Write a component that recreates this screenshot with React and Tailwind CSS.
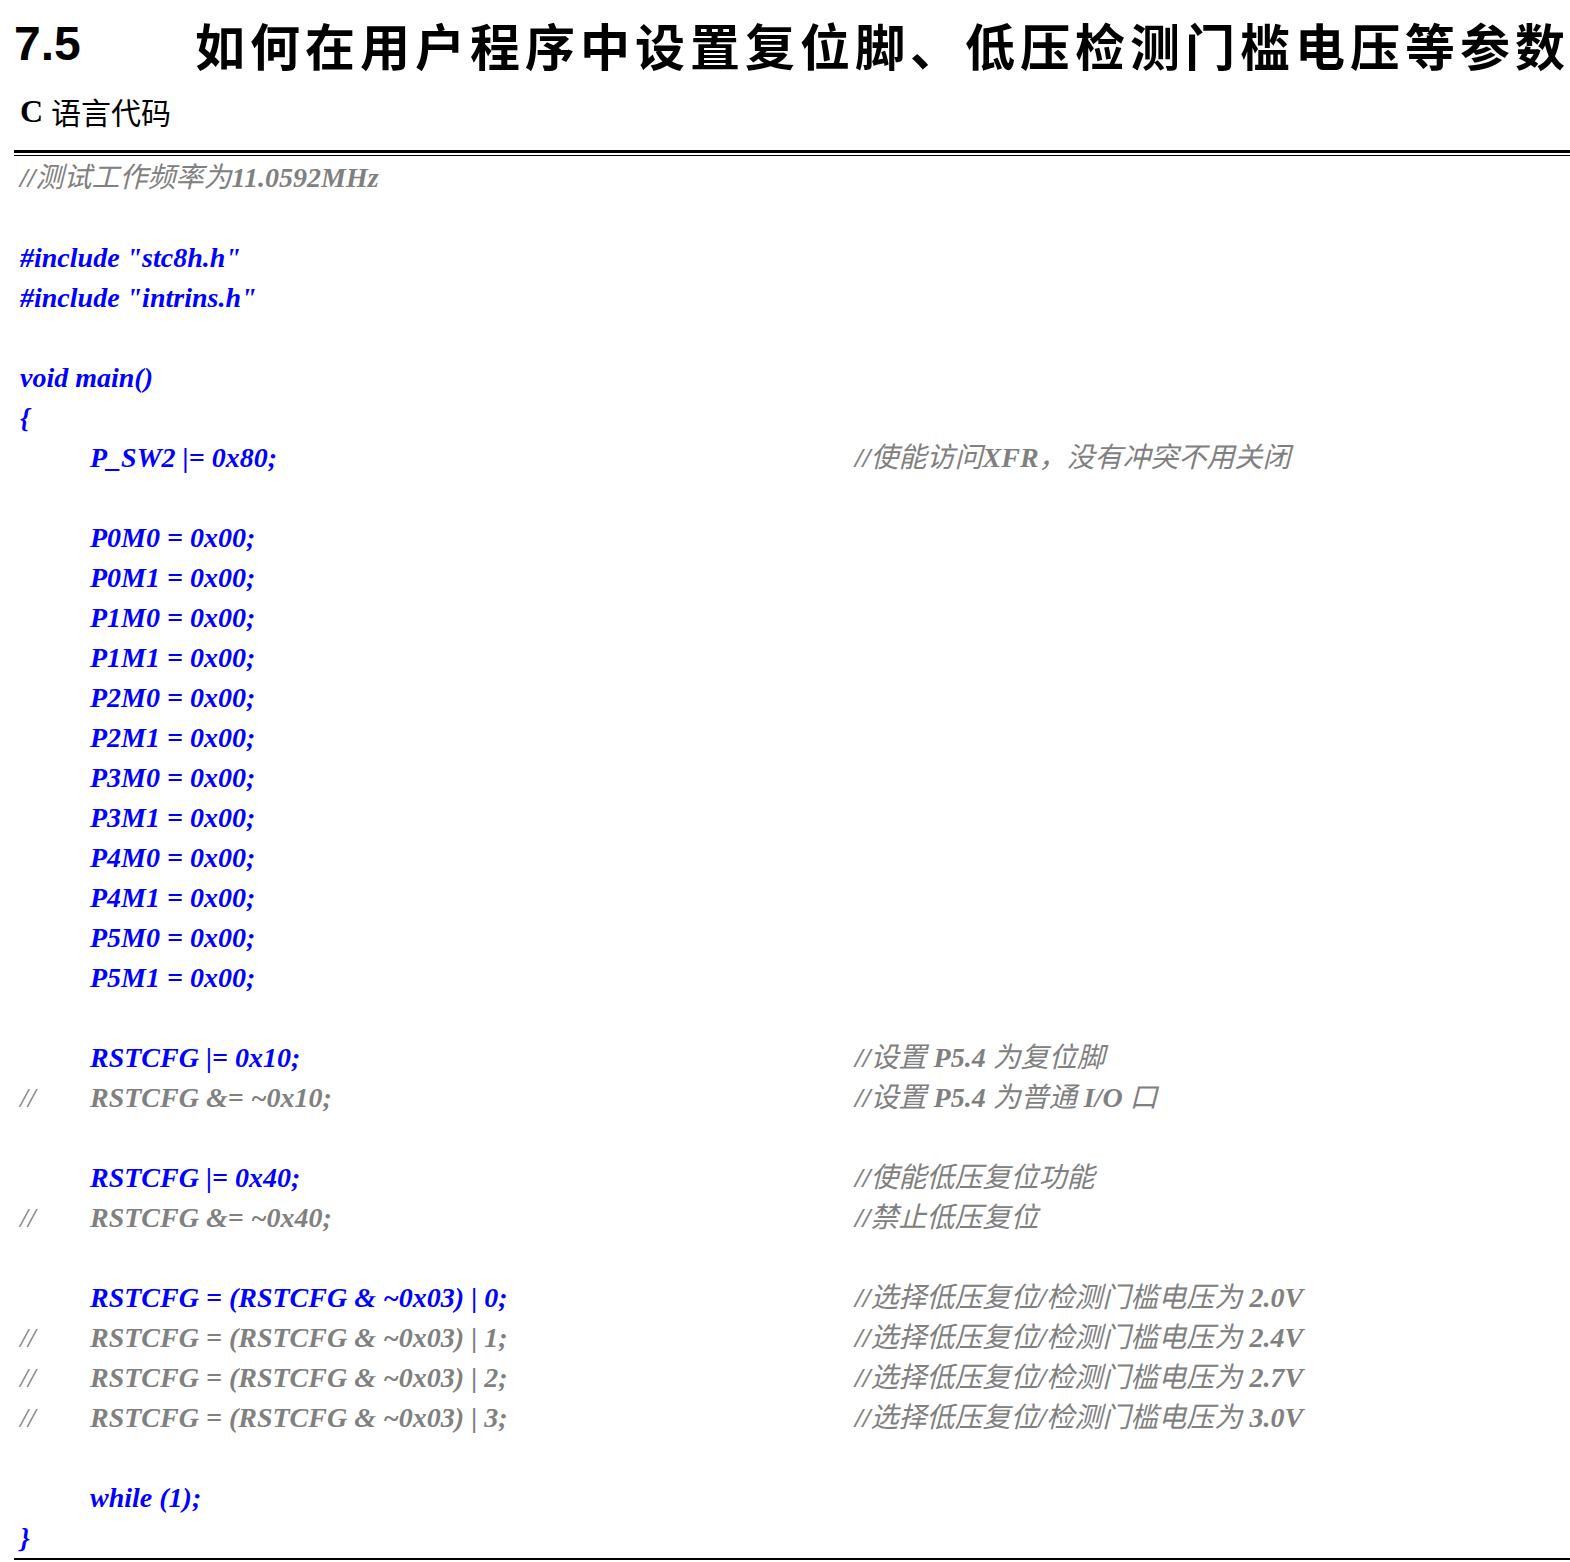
const BLUE = "text-[#0000ff]";
const GRAY = "text-[#808080]";

function Mixed({ text }) {
  const parts = text.split(/([\u3000-\u9fff\uff00-\uffef]+)/);
  return parts.map((p, i) =>
    /[\u3000-\u9fff\uff00-\uffef]/.test(p) ? (
      <span key={i} className="font-normal">{p}</span>
    ) : (
      <span key={i}>{p}</span>
    )
  );
}

const rows = [
  { full: "//测试工作频率为11.0592MHz", fc: GRAY },
  {},
  { full: '#include "stc8h.h"', fc: BLUE },
  { full: '#include "intrins.h"', fc: BLUE },
  {},
  { full: "void main()", fc: BLUE },
  { full: "{", fc: BLUE },
  { code: "P_SW2 |= 0x80;", c: BLUE, cm: "//使能访问XFR，没有冲突不用关闭" },
  {},
  ...["P0M0", "P0M1", "P1M0", "P1M1", "P2M0", "P2M1", "P3M0", "P3M1", "P4M0", "P4M1", "P5M0", "P5M1"].map((r) => ({ code: `${r} = 0x00;`, c: BLUE })),
  {},
  { code: "RSTCFG |= 0x10;", c: BLUE, cm: "//设置 P5.4 为复位脚" },
  { pre: "//", code: "RSTCFG &= ~0x10;", c: GRAY, cm: "//设置 P5.4 为普通 I/O 口" },
  {},
  { code: "RSTCFG |= 0x40;", c: BLUE, cm: "//使能低压复位功能" },
  { pre: "//", code: "RSTCFG &= ~0x40;", c: GRAY, cm: "//禁止低压复位" },
  {},
  { code: "RSTCFG = (RSTCFG & ~0x03) | 0;", c: BLUE, cm: "//选择低压复位/检测门槛电压为 2.0V" },
  { pre: "//", code: "RSTCFG = (RSTCFG & ~0x03) | 1;", c: GRAY, cm: "//选择低压复位/检测门槛电压为 2.4V" },
  { pre: "//", code: "RSTCFG = (RSTCFG & ~0x03) | 2;", c: GRAY, cm: "//选择低压复位/检测门槛电压为 2.7V" },
  { pre: "//", code: "RSTCFG = (RSTCFG & ~0x03) | 3;", c: GRAY, cm: "//选择低压复位/检测门槛电压为 3.0V" },
  {},
  { code: "while (1);", c: BLUE },
  { full: "}", fc: BLUE },
];

export default function App() {
  return (
    <div className="w-[1570px] h-[1562px] bg-white overflow-hidden pt-[14px]" style={{ fontFamily: '"Liberation Serif", "Noto Sans CJK SC", serif' }}>
      <div className="flex items-center h-[60px] text-black font-bold">
        <div className="w-[230px] pl-[14px] text-[48px]" style={{ fontFamily: '"Liberation Sans", Arial, sans-serif' }}>7.5</div>
        <div className="text-[50px] tracking-[5px] whitespace-nowrap" style={{ fontFamily: '"Noto Sans CJK SC", sans-serif' }}>如何在用户程序中设置复位脚、低压检测门槛电压等参数</div>
      </div>
      <div className="mt-[14px] h-[46px] pl-[20px] text-[32px] flex items-center text-black">
        <span className="font-bold mr-[8px]">C</span>
        <span style={{ fontFamily: '"Noto Sans CJK SC", sans-serif' }} className="text-[30px]">语言代码</span>
      </div>
      <div className="ml-[14px] mt-[16px] border-t-[3px] border-black"></div>
      <div className="ml-[14px] mt-[2px] border-t-[1.5px] border-black"></div>
      <div className="pt-[2px]">
        {rows.map((r, i) => (
          <div key={i} className="h-[40px] flex items-center text-[28px] font-bold italic whitespace-nowrap">
            {r.full !== undefined ? (
              <div className={`pl-[20px] ${r.fc}`}><Mixed text={r.full} /></div>
            ) : r.code ? (
              <>
                <div className={`w-[90px] pl-[20px] ${GRAY} font-normal`}>{r.pre || ""}</div>
                <div className={`w-[765px] ${r.c}`}>{r.code}</div>
                <div className={GRAY}>{r.cm ? <Mixed text={r.cm} /> : null}</div>
              </>
            ) : null}
          </div>
        ))}
      </div>
      <div className="ml-[14px] mt-[0px] border-t-2 border-black"></div>
    </div>
  );
}
